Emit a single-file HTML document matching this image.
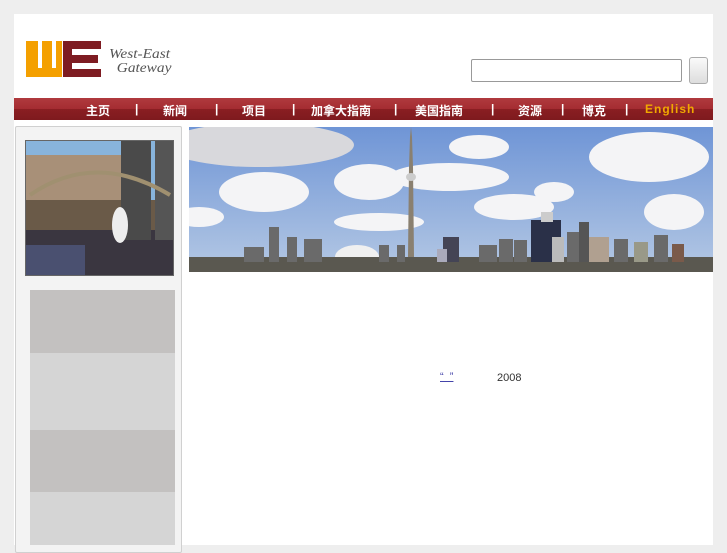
<!DOCTYPE html>
<html><head><meta charset="utf-8"><style>
body{margin:0;background:#eeeeee;width:727px;height:545px;overflow:hidden;font-family:"Liberation Sans","Noto Sans CJK SC",sans-serif;position:relative}
.wrap{position:absolute;left:14px;top:14px;width:699px;height:531px;background:#fff}
.abs{position:absolute}
.nav{left:14px;top:98px;width:699px;height:22px;background:linear-gradient(#b03a3e 0,#a42c31 50%,#8a1e22 51%,#7e1a1e 100%)}
.nav span{position:absolute;top:4px;color:#fff;font-size:12px;font-weight:bold;white-space:nowrap}
</style></head><body>
<div class="wrap"></div>
<div class="abs" style="left:26px;top:41px;width:76px;height:36px">
<svg width="76" height="36"><path d="M0 0h12v27h4V0h10v27h4V0h6v36H0z" fill="#f4a000"/><path d="M37 0h38v8H46v6h26v8H46v6h29v8H37z" fill="#7e1c22"/></svg></div>
<div class="abs" style="left:109px;top:48px;font-family:'Liberation Serif',serif;font-style:italic;font-size:14px;line-height:14px;color:#555;transform:scaleX(1.1);transform-origin:left">West-East<br>&nbsp;&nbsp;Gateway</div>
<div class="abs" style="left:471px;top:59px;width:209px;height:21px;border:1px solid #999;border-radius:2px;background:#fff"></div>
<div class="abs" style="left:689px;top:57px;width:17px;height:25px;border:1px solid #aaa;border-radius:3px;background:linear-gradient(#fafafa,#ddd)"></div>
<div class="abs nav">
<span style="left:72px">主页</span><span style="left:121px">|</span>
<span style="left:149px">新闻</span><span style="left:201px">|</span>
<span style="left:228px">项目</span><span style="left:278px">|</span>
<span style="left:297px">加拿大指南</span><span style="left:380px">|</span>
<span style="left:401px">美国指南</span><span style="left:477px">|</span>
<span style="left:504px">资源</span><span style="left:547px">|</span>
<span style="left:568px">博克</span><span style="left:611px">|</span>
<span style="left:631px;color:#f0a800;letter-spacing:1px">English</span>
</div>
<div class="abs" style="left:15px;top:126px;width:165px;height:425px;background:#f3f3f3;border:1px solid #d0d0d0;border-radius:2px"></div>
<svg class="abs" style="left:25px;top:140px" width="149" height="136">
<rect width="149" height="136" fill="#88b4dc"/>
<rect x="0" y="15" width="110" height="45" fill="#a89078"/>
<rect x="0" y="60" width="149" height="30" fill="#6a5a48"/>
<rect x="0" y="90" width="149" height="46" fill="#3a3640"/>
<rect x="0" y="105" width="60" height="31" fill="#4a5070"/>
<rect x="96" y="0" width="30" height="100" fill="#4a4a4a"/>
<rect x="130" y="0" width="19" height="100" fill="#555"/>
<path d="M5 55 Q70 10 145 55" stroke="#a09070" stroke-width="4" fill="none"/>
<ellipse cx="95" cy="85" rx="8" ry="18" fill="#eee"/>
<rect x="0.5" y="0.5" width="148" height="135" fill="none" stroke="#666"/>
</svg>
<div class="abs" style="left:30px;top:290px;width:145px;height:63px;background:#c3c1c0"></div>
<div class="abs" style="left:30px;top:353px;width:145px;height:77px;background:#d5d5d5"></div>
<div class="abs" style="left:30px;top:430px;width:145px;height:62px;background:#c3c1c0"></div>
<div class="abs" style="left:30px;top:492px;width:145px;height:53px;background:#d5d5d5"></div>
<svg class="abs" style="left:189px;top:127px" width="524" height="145" viewBox="0 0 524 145">
<defs><linearGradient id="s" x1="0" y1="0" x2="0" y2="1"><stop offset="0" stop-color="#6f95d6"/><stop offset="1" stop-color="#b4c8e4"/></linearGradient></defs>
<rect width="524" height="145" fill="url(#s)"/>
<g fill="#f4f4f6">
<ellipse cx="70" cy="18" rx="95" ry="22" fill="#d8d8dc"/>
<ellipse cx="75" cy="65" rx="45" ry="20"/><ellipse cx="180" cy="55" rx="35" ry="18"/><ellipse cx="260" cy="50" rx="60" ry="14"/>
<ellipse cx="290" cy="20" rx="30" ry="12"/><ellipse cx="325" cy="80" rx="40" ry="13"/><ellipse cx="190" cy="95" rx="45" ry="9"/>
<ellipse cx="460" cy="30" rx="60" ry="25"/><ellipse cx="485" cy="85" rx="30" ry="18"/><ellipse cx="10" cy="90" rx="25" ry="10"/>
<ellipse cx="365" cy="65" rx="20" ry="10"/>
</g>
<g fill="#6a6a6a">
<rect x="0" y="130" width="524" height="15" fill="#5a5850"/>
<rect x="80" y="100" width="10" height="35"/><rect x="98" y="110" width="10" height="25"/><rect x="115" y="112" width="18" height="23"/>
<rect x="55" y="120" width="20" height="15"/><rect x="190" y="118" width="10" height="17"/><rect x="208" y="118" width="8" height="17"/>
<rect x="254" y="110" width="16" height="25" fill="#445"/><rect x="248" y="122" width="10" height="13" fill="#aab"/>
<rect x="290" y="118" width="18" height="17"/><rect x="310" y="112" width="14" height="23"/><rect x="325" y="113" width="13" height="22"/>
<rect x="342" y="93" width="30" height="42" fill="#2a3048"/><rect x="352" y="85" width="12" height="10" fill="#ccc"/>
<rect x="363" y="110" width="12" height="25" fill="#bbb"/><rect x="378" y="105" width="12" height="30"/>
<rect x="390" y="95" width="10" height="40" fill="#555"/><rect x="400" y="110" width="20" height="25" fill="#b0a090"/>
<rect x="425" y="112" width="14" height="23"/><rect x="445" y="115" width="14" height="20" fill="#998"/>
<rect x="465" y="108" width="14" height="27"/><rect x="483" y="117" width="12" height="18" fill="#7a5a4a"/>
</g>
<path d="M146 130 a22 12 0 0 1 44 0z" fill="#f0f0f0"/>
<path d="M219 130 L220 40 L221 10 L222 0 L223 10 L224 40 L225 130z" fill="#8a8070"/>
<ellipse cx="222" cy="50" rx="5" ry="4" fill="#ccc"/>
</svg>
<div class="abs" style="left:440px;top:371px;font-size:11px;color:#44a;text-decoration:underline">“&nbsp;&nbsp;”</div>
<div class="abs" style="left:497px;top:372px;font-size:11px;color:#333">2008</div>
</body></html>
